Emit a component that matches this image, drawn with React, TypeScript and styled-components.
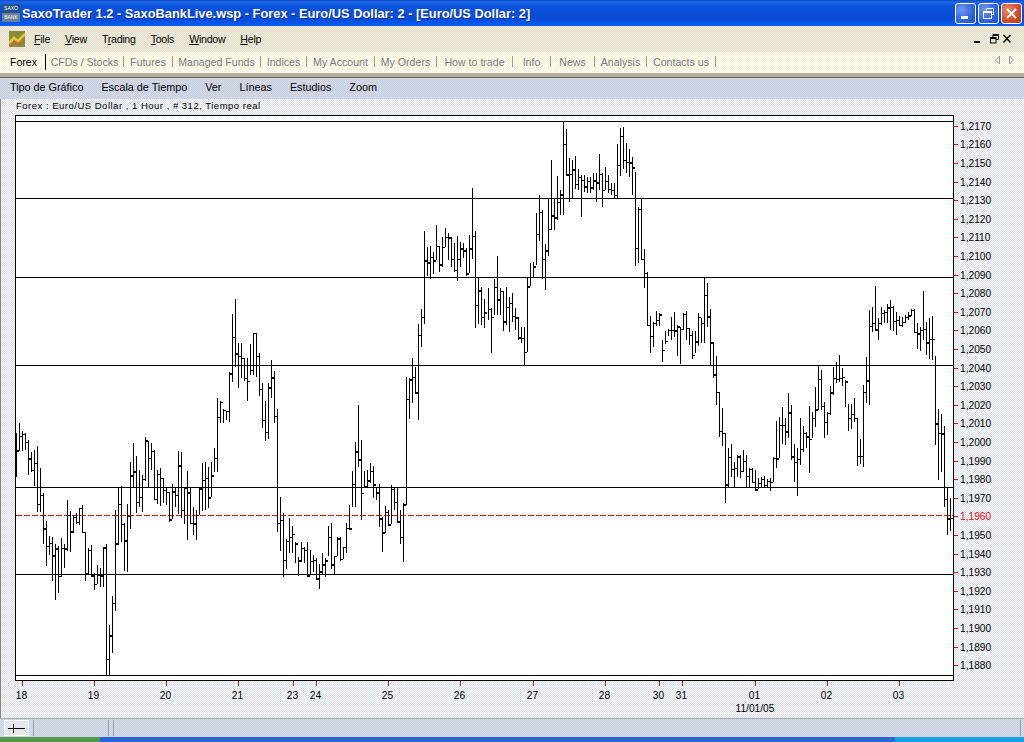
import React from "react";
import styled, { createGlobalStyle, css } from "styled-components";

const dither = (a: string, b: string) => css`
  background-color: ${a};
  background-image: linear-gradient(45deg, ${b} 25%, transparent 25%, transparent 75%, ${b} 75%),
    linear-gradient(45deg, ${b} 25%, transparent 25%, transparent 75%, ${b} 75%);
  background-size: 2px 2px;
  background-position: 0 0, 1px 1px;
`;

const GlobalStyle = createGlobalStyle`
  html, body { margin: 0; padding: 0; background: #fff; }
  body { font-family: "Liberation Sans", Arial, sans-serif; }
`;

type Bar = [number, number, number];

// hi, lo, close read off the chart, y in thirds of a pixel from the segment's top
const segments: { top: number; bars: Bar[] }[] = [
  {
    top: 400,
    bars: [
      [100, 230, 151], [70, 152, 109], [94, 152, 103], [100, 150, 127], [120, 224, 174], [156, 215, 210],
      [150, 257, 188], [139, 335, 311], [205, 335, 284], [280, 431, 383], [363, 497, 437], [409, 464, 429],
      [412, 542, 464], [431, 599, 445], [437, 578, 529], [415, 532, 445], [433, 503, 445], [300, 453, 344],
      [333, 456, 394], [345, 400, 351], [340, 373, 366], [323, 375, 324], [316, 397, 397], [397, 542, 520],
      [445, 523, 449], [436, 529, 526], [520, 569, 553], [496, 553, 525], [505, 560, 525], [440, 560, 440],
      [433, 826, 777], [675, 826, 705], [587, 758, 609], [330, 632, 428], [262, 434, 313], [258, 425, 372],
      [370, 513, 421], [312, 515, 347], [187, 386, 225], [129, 262, 214], [168, 340, 307], [210, 322, 292],
      [225, 335, 237], [112, 242, 121], [122, 262, 174], [130, 210, 154], [151, 300, 297], [210, 312, 222],
      [205, 318, 233], [233, 310, 271], [262, 315, 277], [277, 365, 356], [253, 358, 274], [262, 322, 286],
      [153, 342, 196], [157, 355, 331], [262, 372, 262], [212, 420, 277], [262, 372, 370], [320, 406, 370],
      [330, 420, 345], [262, 345, 264], [190, 332, 241], [186, 330, 234], [201, 325, 292], [187, 292, 225],
      [145, 215, 174],
    ],
  },
  {
    top: 290,
    bars: [
      [325, 545, 380], [333, 398, 336], [358, 398, 360], [362, 390, 364], [245, 395, 248], [72, 275, 142],
      [27, 230, 190], [158, 293, 197], [160, 265, 205], [205, 273, 265], [205, 332, 272], [163, 255, 240],
      [128, 255, 130], [128, 262, 198], [190, 318, 297], [280, 413, 390], [333, 452, 426], [280, 446, 290],
      [210, 323, 262], [243, 398, 378], [357, 725, 698], [622, 782, 690], [670, 860, 810], [748, 838, 752],
      [684, 788, 742], [708, 790, 733], [755, 818, 760], [800, 857, 810], [757, 815, 773], [770, 818, 780],
      [755, 857, 855], [780, 855, 812], [795, 845, 810], [805, 870, 865], [822, 896, 842], [790, 855, 822],
      [805, 860, 810], [708, 798, 742], [700, 838, 823], [797, 853, 797], [742, 798, 745], [742, 812, 808],
      [770, 808, 772], [698, 790, 713], [645, 715, 715],
    ],
  },
  {
    top: 180,
    bars: [
      [873, 982, 912], [787, 982, 812], [675, 860, 836], [780, 1020, 940], [873, 925, 918], [870, 925, 900],
      [850, 910, 873], [858, 955, 912], [922, 960, 937], [912, 1042, 1014], [1010, 1115, 1057], [978, 1060, 995],
      [990, 1032, 1032], [915, 1032, 926], [922, 990, 967], [922, 1030, 1023], [990, 1093, 1070], [968, 1145, 971],
      [590, 975, 658], [595, 716, 598], [535, 668, 591], [562, 637, 637], [433, 720, 466], [388, 500, 412],
      [153, 433, 240], [202, 288, 245], [198, 296, 232], [215, 282, 240], [136, 240, 199], [199, 275, 252],
      [170, 260, 200], [145, 200, 171], [160, 240, 171], [170, 260, 237], [190, 275, 270], [168, 302, 237],
      [185, 260, 204], [190, 233, 210], [205, 287, 280], [165, 280, 205], [25, 237, 168], [153, 443, 376],
      [292, 433, 331], [320, 435, 411], [357, 445, 396], [325, 420, 387], [384, 518, 410], [296, 405, 320],
      [228, 405, 358], [325, 405, 333], [333, 452, 422], [322, 435, 381], [350, 455, 369], [340, 425, 407],
      [385, 450, 410], [410, 480, 470], [440, 490, 473], [440, 555, 516], [292, 516, 318], [250, 318, 290],
      [245, 292, 257], [98, 255, 162], [45, 182, 95], [90, 297, 237], [192, 330, 210], [55, 228, 146],
    ],
  },
  {
    top: 110,
    bars: [
      [150, 360, 316], [265, 360, 322], [198, 330, 276], [240, 315, 253], [35, 315, 103], [58, 197, 191],
      [145, 275, 191], [150, 268, 177], [138, 237, 222], [178, 240, 201], [195, 320, 210], [195, 247, 229],
      [200, 248, 212], [200, 248, 231], [190, 240, 211], [190, 275, 216], [132, 240, 191], [190, 292, 240],
      [170, 240, 212], [195, 248, 236], [220, 255, 240], [218, 268, 256], [102, 268, 164], [55, 197, 78],
      [52, 178, 150], [98, 190, 155], [118, 200, 155], [142, 255, 171], [185, 468, 415], [292, 458, 296],
      [265, 448, 448], [418, 533, 490],
    ],
  },
  {
    top: 270,
    bars: [
      [6, 165, 165], [138, 248, 197], [157, 230, 160], [123, 168, 150], [130, 168, 132], [210, 275, 241],
      [183, 223, 212], [178, 197, 180], [142, 210, 180], [127, 200, 180], [165, 257, 167], [170, 282, 178],
      [130, 180, 132], [122, 210, 173], [173, 225, 195], [183, 268, 255], [183, 250, 212], [128, 228, 142],
      [145, 218, 160], [22, 218, 74], [38, 170, 137], [118, 285, 217], [217, 325, 312], [258, 405, 367],
      [367, 500, 484], [415, 527, 490], [488, 698, 643], [535, 655, 560], [522, 620, 597], [575, 652, 594],
      [555, 620, 558], [555, 625, 604], [540, 605, 572], [555, 650, 617], [595, 652, 597], [595, 640, 637],
      [600, 660, 657], [625, 658, 640], [620, 650, 628], [617, 652, 645], [628, 650, 632], [625, 662, 635],
      [562, 637, 565], [453, 595, 563], [440, 565, 465], [412, 522, 465], [445, 525, 484], [370, 503, 425],
      [405, 570, 558], [523, 635, 576],
    ],
  },
  {
    top: 280,
    bars: [
      [505, 648, 536], [415, 555, 507], [438, 515, 458], [455, 505, 467], [378, 578, 477], [397, 475, 413],
      [320, 440, 387], [257, 390, 296], [270, 390, 377], [365, 473, 427], [395, 465, 399], [318, 405, 335],
      [262, 345, 295], [245, 310, 296], [225, 305, 293], [265, 318, 290], [300, 380, 302], [372, 452, 415],
      [372, 448, 402], [355, 425, 413], [413, 557, 529], [478, 552, 529], [315, 560, 335], [232, 368, 299],
      [90, 375, 138], [80, 155, 128], [18, 150, 148], [115, 180, 128], [80, 135, 100], [90, 128, 97],
      [73, 128, 82], [60, 150, 80], [78, 153, 122], [97, 165, 120], [108, 138, 135], [112, 140, 125],
      [105, 130, 110], [95, 120, 105], [88, 108, 89], [88, 160, 156], [130, 207, 160], [140, 212, 150],
      [33, 180, 148], [125, 225, 185], [115, 238, 178], [108, 240, 178], [228, 495, 430], [388, 600, 458],
      [403, 575, 458], [437, 680, 657], [622, 765, 714], [655, 752, 714],
    ],
  },
];

const flatBars = segments.flatMap((s) =>
  s.bars.map(([hi, lo, close]) => ({
    hi: Math.round(s.top + hi / 3),
    lo: Math.round(s.top + lo / 3),
    close: Math.round(s.top + close / 3),
  }))
);

const barPath = flatBars
  .map((b, i) => {
    const x = Math.round(16 + i * 3.0032);
    const heavy = (b.close * 7 + i) % 3 === 0 ? `M${x} ${b.close + 1.5}H${x + 3}` : "";
    return `M${x + 0.5} ${b.hi}V${b.lo}M${x} ${b.close + 0.5}H${x + 3}${heavy}`;
  })
  .join("");

const gridLines = [198, 277, 365, 487, 574];
const priceLabels = Array.from({ length: 30 }, (_, k) => {
  const value = 12170 - k * 10;
  const text = `1,${String(value).slice(1)}`;
  return { text, y: Math.round(125.8 + 18.6 * k), red: value === 11960 };
});
const dateLabels = [
  ["18", 22], ["19", 94], ["20", 166], ["21", 238], ["23", 293], ["24", 316], ["25", 388], ["26", 460],
  ["27", 533], ["28", 605], ["30", 659], ["31", 682], ["01", 755], ["02", 827], ["03", 899],
] as const;

const tabs = [
  { label: "Forex", w: 44, active: true },
  { label: "CFDs / Stocks", w: 78 },
  { label: "Futures", w: 49 },
  { label: "Managed Funds", w: 88 },
  { label: "Indices", w: 46 },
  { label: "My Account", w: 68 },
  { label: "My Orders", w: 62 },
  { label: "How to trade", w: 76 },
  { label: "Info", w: 38 },
  { label: "News", w: 44 },
  { label: "Analysis", w: 52 },
  { label: "Contacts us", w: 69 },
];

const Page = styled.div`
  width: 1024px;
  height: 742px;
  display: flex;
  flex-direction: column;
  overflow: hidden;
`;

const TitleBar = styled.div`
  height: 26px;
  flex: none;
  display: flex;
  align-items: center;
  padding: 0 2px 0 2px;
  gap: 2px;
  background: linear-gradient(#0a4cc8 0, #1e68e8 8%, #0a52dc 24%, #0a4cd4 70%, #0058ec 90%, #0060f4 100%);
`;

const Logo = styled.div`
  width: 18px;
  height: 18px;
  flex: none;
  display: flex;
  flex-direction: column;
  font-size: 5px;
  line-height: 9px;
  text-align: center;
  color: #fff;
  overflow: hidden;
`;

const LogoTop = styled.span`
  height: 9px;
  background: #26518f;
`;

const LogoBottom = styled.span`
  height: 9px;
  background: #6d7f9a;
`;

const TitleText = styled.div`
  flex: 1;
  color: #fff;
  font-size: 12.85px;
  font-weight: 700;
  white-space: nowrap;
  text-shadow: 1px 1px 0 #0a2f9c;
`;

const WinButton = styled.div<{ $close?: boolean }>`
  width: 21px;
  height: 21px;
  box-sizing: border-box;
  flex: none;
  margin-left: 0;
  border: 1px solid #fff;
  border-radius: 3px;
  display: flex;
  align-items: center;
  justify-content: center;
  background: ${(p) =>
    p.$close
      ? "radial-gradient(circle at 30% 30%, #e88a6c, #d2482a 60%, #c23c1c)"
      : "radial-gradient(circle at 30% 30%, #7096ee, #2e5fdc 65%, #2450c8)"};
`;

const MenuBar = styled.div`
  height: 26px;
  flex: none;
  display: flex;
  align-items: center;
  padding: 0 12px 0 9px;
  ${dither("#efecdc", "#e2decb")}
`;

const MenuIcon = styled.svg`
  width: 16px;
  height: 16px;
  flex: none;
  margin-right: 9px;
`;

const MenuItems = styled.div`
  display: flex;
  flex: 1;
  gap: 15px;
`;

const MenuItem = styled.span`
  font-size: 10.6px;
  letter-spacing: -0.25px;
  color: #000;
  & u {
    text-decoration: underline;
  }
`;

const MdiIcon = styled.svg`
  width: 38px;
  height: 12px;
  flex: none;
`;

const TabBar = styled.div`
  height: 21px;
  flex: none;
  display: flex;
  align-items: center;
  padding: 0 8px 2px 2px;
  box-sizing: border-box;
  ${dither("#fffbe8", "#f6f2e2")}
`;

const Tab = styled.div<{ $w: number; $active?: boolean }>`
  width: ${(p) => p.$w}px;
  height: ${(p) => (p.$active ? 16 : 11)}px;
  box-sizing: border-box;
  flex: none;
  display: flex;
  align-items: center;
  justify-content: center;
  font-size: 10.6px;
  white-space: nowrap;
  color: ${(p) => (p.$active ? "#000" : "#7c7c7c")};
  border-right: 1px solid ${(p) => (p.$active ? "#000" : "#a09c88")};
`;

const TabArrows = styled.svg`
  width: 22px;
  height: 10px;
  flex: none;
  margin: 0 0 4px auto;
`;

const Rule = styled.div`
  height: 5px;
  flex: none;
  box-sizing: border-box;
  background: #b4b09c;
  border-bottom: 1px solid #6e6a58;
`;

const ChartMenu = styled.div`
  height: 21px;
  flex: none;
  display: flex;
  align-items: center;
  gap: 18px;
  padding: 0 0 3px 10px;
  box-sizing: border-box;
  ${dither("#c8cfe0", "#d4d9e6")}
`;

const ChartMenuItem = styled.span`
  font-size: 10.8px;
  color: #000;
`;

const ChartPanel = styled.div`
  flex: 1;
  min-height: 0;
  border-left: 1px solid #8c8a70;
  box-sizing: border-box;
  ${dither("#f8f9fb", "#dde2ec")}
`;

const Caption = styled.div`
  height: 16px;
  box-sizing: border-box;
  padding-left: 15px;
  line-height: 14px;
  font-size: 9.5px;
  letter-spacing: 0.5px;
  color: #000;
  white-space: nowrap;
`;

const ChartSvg = styled.svg`
  display: block;
  margin-left: -1px;
  font-family: "Liberation Sans", Arial, sans-serif;
`;

const StatusBar = styled.div`
  height: 19px;
  flex: none;
  display: flex;
  gap: 4px;
  padding: 1px 3px 0 4px;
  box-sizing: border-box;
  ${dither("#c8cfe0", "#d8dde8")}
  border-top: 1px solid #a8acb8;
`;

const CrossCell = styled.div`
  width: 25px;
  height: 16px;
  flex: none;
  display: flex;
  align-items: center;
  justify-content: center;
  box-sizing: border-box;
  border: 1px solid #fff;
  background: #e6e8f0;
`;

const StatusCell = styled.div<{ $w?: number }>`
  height: 16px;
  box-sizing: border-box;
  border-left: 1px solid #9a9ea8;
  border-right: 1px solid #9a9ea8;
  ${(p) => (p.$w ? `width: ${p.$w}px; flex: none;` : "flex: 1;")}
`;

const Taskbar = styled.div`
  height: 5px;
  flex: none;
  display: flex;
`;

const TaskPart = styled.div<{ $w?: number; $c: string }>`
  background: ${(p) => p.$c};
  ${(p) => (p.$w ? `width: ${p.$w}px; flex: none;` : "flex: 1;")}
`;

const Chart = () => (
  <ChartSvg width="1024" height="603" viewBox="0 115 1024 603">
    <rect x="15.5" y="115.5" width="938" height="565" fill="#fff" stroke="#000" />
    <g stroke="#000" shapeRendering="crispEdges">
      <line x1="16" x2="953" y1="121.5" y2="121.5" />
      <line x1="16" x2="953" y1="675.5" y2="675.5" />
      {gridLines.map((y) => (
        <line key={y} x1="16" x2="953" y1={y + 0.5} y2={y + 0.5} />
      ))}
    </g>
    <line x1="16" x2="953" y1="515.5" y2="515.5" stroke="#e01010" strokeDasharray="6 2" shapeRendering="crispEdges" />
    <path d={barPath} fill="none" stroke="#000" shapeRendering="crispEdges" />
    <g fontSize="10.2">
      {priceLabels.map((p) => (
        <g key={p.text}>
          <line x1="954" x2="958" y1={p.y + 0.5} y2={p.y + 0.5} stroke="#e01010" shapeRendering="crispEdges" />
          <text x="960" y={p.y + 4} fill={p.red ? "#e01010" : "#000"}>
            {p.text}
          </text>
        </g>
      ))}
      {dateLabels.map(([label, x]) => (
        <g key={x}>
          <line x1={x + 0.5} x2={x + 0.5} y1="681" y2="686" stroke="#e01010" shapeRendering="crispEdges" />
          <text x={x - 0.5} y="699" textAnchor="middle" fill="#000">
            {label}
          </text>
        </g>
      ))}
      <text x="755" y="712" textAnchor="middle" fill="#000">
        11/01/05
      </text>
    </g>
  </ChartSvg>
);

export default function App() {
  return (
    <Page>
      <GlobalStyle />
      <TitleBar>
        <Logo>
          <LogoTop>SAXO</LogoTop>
          <LogoBottom>BANK</LogoBottom>
        </Logo>
        <TitleText>SaxoTrader 1.2 - SaxoBankLive.wsp - Forex - Euro/US Dollar: 2 - [Euro/US Dollar: 2]</TitleText>
        <WinButton>
          <svg width="13" height="13" viewBox="0 0 13 13">
            <rect x="2" y="9" width="7" height="3" fill="#fff" />
          </svg>
        </WinButton>
        <WinButton>
          <svg width="13" height="13" viewBox="0 0 13 13" fill="none" stroke="#fff">
            <path d="M4.5 3.5V1.5H11.5V7.5H9.5" />
            <rect x="1.5" y="4.5" width="8" height="7" />
            <path d="M1.5 5.5H9.5" />
          </svg>
        </WinButton>
        <WinButton $close>
          <svg width="13" height="13" viewBox="0 0 13 13" stroke="#fff" strokeWidth="2">
            <path d="M2 2L11 11M11 2L2 11" />
          </svg>
        </WinButton>
      </TitleBar>

      <MenuBar>
        <MenuIcon viewBox="0 0 16 16">
          <rect width="16" height="16" fill="#8a8a3a" />
          <path d="M0 12L5 7L9 10L16 3" stroke="#e8c83a" strokeWidth="2.5" fill="none" />
          <path d="M0 15L6 11L10 13L16 8" stroke="#c86a3a" strokeWidth="1.5" fill="none" />
        </MenuIcon>
        <MenuItems>
          <MenuItem><u>F</u>ile</MenuItem>
          <MenuItem><u>V</u>iew</MenuItem>
          <MenuItem>T<u>r</u>ading</MenuItem>
          <MenuItem><u>T</u>ools</MenuItem>
          <MenuItem><u>W</u>indow</MenuItem>
          <MenuItem><u>H</u>elp</MenuItem>
        </MenuItems>
        <MdiIcon viewBox="0 0 38 12">
          <rect x="0" y="8" width="6" height="2" fill="#000" />
          <path d="M19 4.5V1.5H24.5V6.5H22" fill="none" stroke="#000" />
          <rect x="16.5" y="4.5" width="5.5" height="5.5" fill="none" stroke="#000" />
          <path d="M16.5 5.5H22M19 2.5H24.5" stroke="#000" />
          <path d="M29.5 2L36.5 9.5M36.5 2L29.5 9.5" stroke="#000" strokeWidth="1.5" />
        </MdiIcon>
      </MenuBar>

      <TabBar>
        {tabs.map((t) => (
          <Tab key={t.label} $w={t.w} $active={t.active}>
            {t.label}
          </Tab>
        ))}
        <TabArrows viewBox="0 0 22 10" fill="none" stroke="#9a9a9a">
          <path d="M5.5 1L1.5 5L5.5 9Z" />
          <path d="M15.5 1L19.5 5L15.5 9Z" />
        </TabArrows>
      </TabBar>
      <Rule />

      <ChartMenu>
        {["Tipo de Gráfico", "Escala de Tiempo", "Ver", "Líneas", "Estudios", "Zoom"].map((m) => (
          <ChartMenuItem key={m}>{m}</ChartMenuItem>
        ))}
      </ChartMenu>

      <ChartPanel>
        <Caption>Forex : Euro/US Dollar , 1 Hour , # 312, Tiempo real</Caption>
        <Chart />
      </ChartPanel>

      <StatusBar>
        <CrossCell>
          <svg width="17" height="9" viewBox="0 0 17 9" stroke="#000">
            <path d="M0 4.5H17M5.5 0V9" />
          </svg>
        </CrossCell>
        <StatusCell $w={76} />
        <StatusCell />
      </StatusBar>
      <Taskbar>
        <TaskPart $w={100} $c="#4f9a4f" />
        <TaskPart $c="#2a66d8" />
        <TaskPart $w={129} $c="#15a0ea" />
      </Taskbar>
    </Page>
  );
}
